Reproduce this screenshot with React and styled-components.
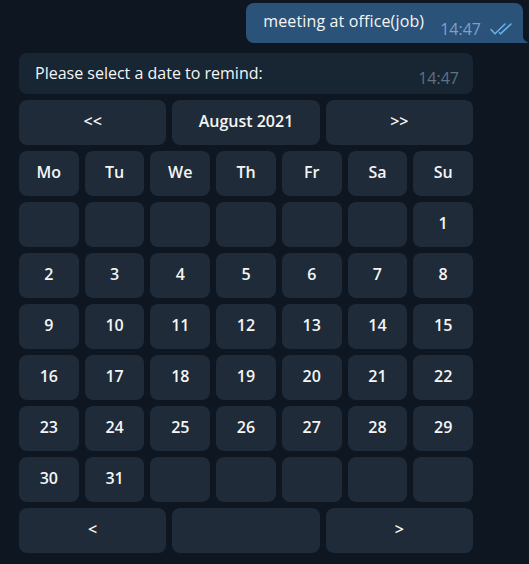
import React from "react";
import styled, { createGlobalStyle } from "styled-components";

const Global = createGlobalStyle`
  html, body { margin: 0; padding: 0; background: #0e1621; }
  body { font-family: "Open Sans", "Noto Sans", sans-serif; }
`;

const Page = styled.div`
  width: 529px;
  height: 564px;
  box-sizing: border-box;
  padding: 3px 0 0 19px;
  display: flex;
  flex-direction: column;
  background: #0e1621;
  overflow: hidden;
`;

const OutRow = styled.div`
  display: flex;
  justify-content: flex-end;
  padding-right: 6px;
`;

const OutBubble = styled.div`
  position: relative;
  height: 40px;
  box-sizing: border-box;
  background: #2b5278;
  border-radius: 8px 8px 0 8px;
  padding: 0 11px 0 17px;
  display: flex;
  align-items: center;
`;

const Tail = styled.svg`
  position: absolute;
  right: -6px;
  bottom: 0;
`;

const MsgText = styled.span`
  color: #f5f5f5;
  font-size: 16px;
  line-height: 20px;
  letter-spacing: 0.14px;
  margin-top: -4px;
  white-space: nowrap;
`;

const Meta = styled.span`
  display: flex;
  align-items: center;
  gap: 9px;
  margin-left: 16px;
  margin-top: 12px;
  color: ${(p) => p.$color};
  font-size: 16px;
  line-height: 20px;
  white-space: nowrap;
`;

const InBubble = styled.div`
  margin-top: 10px;
  width: 454px;
  height: 41px;
  box-sizing: border-box;
  background: #182533;
  border-radius: 8px;
  padding: 0 14px 0 16px;
  display: flex;
  align-items: center;
  justify-content: space-between;
`;

const InText = styled.span`
  color: #f5f5f5;
  font-size: 16px;
  line-height: 20px;
  margin-top: -1px;
`;

const InTime = styled.span`
  color: #5f7183;
  font-size: 16px;
  line-height: 20px;
  margin-top: 9px;
`;

const Keyboard = styled.div`
  width: 454px;
  margin-top: 6px;
  display: flex;
  flex-direction: column;
  gap: 6px;
`;

const KRow = styled.div`
  display: grid;
  grid-template-columns: repeat(${(p) => p.$cols}, 1fr);
  gap: 6px;
`;

const Key = styled.div`
  height: 45px;
  box-sizing: border-box;
  padding-bottom: 4px;
  border-radius: 8px;
  background: #1f2b38;
  color: #f5f5f5;
  font-size: 16px;
  font-weight: 600;
  display: flex;
  align-items: center;
  justify-content: center;
`;

const Checks = () => (
  <svg width="22" height="12" viewBox="0 0 22 12" fill="none" stroke="#64b2ea" strokeWidth="1.6" strokeLinecap="round" strokeLinejoin="round">
    <path d="M1 6.5 L5 10.8 L15 1" />
    <path d="M9.5 9.8 L10.5 10.8 L21 1" />
  </svg>
);

const days = ["Mo", "Tu", "We", "Th", "Fr", "Sa", "Su"];
const cells = [
  "", "", "", "", "", "", "1",
  "2", "3", "4", "5", "6", "7", "8",
  "9", "10", "11", "12", "13", "14", "15",
  "16", "17", "18", "19", "20", "21", "22",
  "23", "24", "25", "26", "27", "28", "29",
  "30", "31", "", "", "", "", "",
];
const weeks = [];
for (let i = 0; i < cells.length; i += 7) weeks.push(cells.slice(i, i + 7));

export default function App() {
  return (
    <>
      <Global />
      <Page>
        <OutRow>
          <OutBubble>
            <MsgText>meeting at office(job)</MsgText>
            <Meta $color="#7aa3c9">
              14:47
              <Checks />
            </Meta>
            <Tail width="7" height="10" viewBox="0 0 7 10">
              <path d="M0 0 C0 5 3 8.5 7 10 L0 10 Z" fill="#2b5278" />
            </Tail>
          </OutBubble>
        </OutRow>
        <InBubble>
          <InText>Please select a date to remind:</InText>
          <InTime>14:47</InTime>
        </InBubble>
        <Keyboard>
          <KRow $cols={3}>
            <Key>&lt;&lt;</Key>
            <Key>August 2021</Key>
            <Key>&gt;&gt;</Key>
          </KRow>
          <KRow $cols={7}>
            {days.map((d) => (
              <Key key={d}>{d}</Key>
            ))}
          </KRow>
          {weeks.map((w, i) => (
            <KRow $cols={7} key={i}>
              {w.map((c, j) => (
                <Key key={j}>{c}</Key>
              ))}
            </KRow>
          ))}
          <KRow $cols={3}>
            <Key>&lt;</Key>
            <Key></Key>
            <Key>&gt;</Key>
          </KRow>
        </Keyboard>
      </Page>
    </>
  );
}
